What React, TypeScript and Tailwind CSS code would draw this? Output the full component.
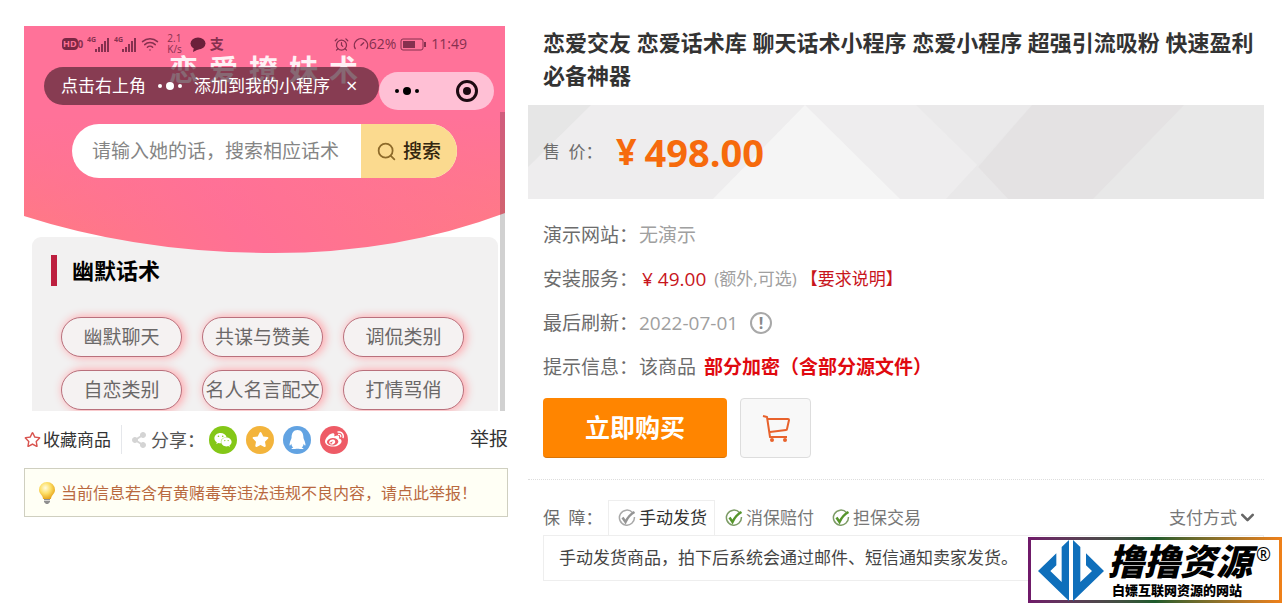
import { FaQq, FaRegStar, FaShareAlt, FaStar, FaWeibo, FaWeixin } from "react-icons/fa";
import { Search, Wifi, AlarmClock, Gauge, ChevronDown } from "lucide-react";
import clsx from "clsx";

const categories = ["幽默聊天", "共谋与赞美", "调侃类别", "自恋类别", "名人名言配文", "打情骂俏"];

const guarantees = [
    { text: "手动发货", active: true },
    { text: "消保赔付", active: false },
    { text: "担保交易", active: false },
];

const shareLinks = [
    { name: "微信", color: "bg-[#84c717]", icon: <FaWeixin size={18} /> },
    { name: "QQ空间", color: "bg-[#f3b43c]", icon: <FaStar size={17} /> },
    { name: "QQ", color: "bg-[#62a3e2]", icon: <FaQq size={19} /> },
    { name: "微博", color: "bg-[#ee5b66]", icon: <FaWeibo size={19} /> },
];

function Signal() {
    return (
        <svg width="23" height="17" viewBox="0 0 23 17" fill="currentColor" aria-hidden="true">
            <text x="0" y="6" fontSize="7" fontWeight="700">4G</text>
            <path d="M8 13h2v3H8zM11 11h2v5h-2zM14 8h2v8h-2zM17 5h2v11h-2zM20 2h2v14h-2z" />
        </svg>
    );
}

//* Status bar at the top of the phone preview
function StatusBar() {
    return (
        <div className="flex h-9 items-center justify-between pr-[38px] pl-[38px] text-sm text-[#86304f]">
            <div className="flex items-center gap-1">
                <span className="flex items-center">
                    <span className="rounded-sm bg-[#7a2744] px-px text-[9px] leading-3 font-bold text-[#ff7395]">HD</span>
                    <span className="text-[10px] leading-3 font-bold">0</span>
                </span>
                <Signal />
                <Signal />
                <Wifi size={18} />
                <span className="ml-1 text-[10px] leading-[11px]">2.1<br />K/s</span>
                <svg className="ml-1" width="16" height="15" viewBox="0 0 16 15" fill="#6b1f3a" aria-hidden="true">
                    <ellipse cx="8" cy="6.500" rx="7.500" ry="6" />
                    <path d="M4 10l-1 5 6-3z" />
                </svg>
                <span className="text-sm font-bold">支</span>
            </div>
            <div className="flex items-center gap-1">
                <AlarmClock size={15} />
                <Gauge size={16} />
                <span className="-ml-1">62%</span>
                <svg width="27" height="13" viewBox="0 0 27 13" aria-hidden="true">
                    <rect x="1" y="1" width="22" height="11" rx="2" fill="none" stroke="currentColor" />
                    <rect x="3" y="3" width="12" height="7" fill="currentColor" />
                    <rect x="24" y="4" width="2" height="5" fill="currentColor" />
                </svg>
                <span>11:49</span>
            </div>
        </div>
    );
}

function PhonePreview() {
    return (
        <div className="relative h-[385px] w-[481px] overflow-hidden bg-white">
            <svg className="absolute inset-0 h-full w-full" viewBox="0 0 481 385" preserveAspectRatio="none" aria-hidden="true">
                <defs>
                    <linearGradient id="hero" x1="0" y1="1" x2="1" y2="0.700">
                        <stop offset="0" stopColor="#ff7a83" />
                        <stop offset="0.450" stopColor="#ff7095" />
                        <stop offset="1" stopColor="#ff7a85" />
                    </linearGradient>
                    <linearGradient id="heroTop" x1="0" y1="0" x2="0" y2="1">
                        <stop offset="0" stopColor="#ff7299" />
                        <stop offset="0.400" stopColor="#ff7299" />
                        <stop offset="0.900" stopColor="#ff7299" stopOpacity="0" />
                    </linearGradient>
                </defs>
                <rect x="8" y="211" width="466" height="190" rx="9" fill="#f2f1f1" />
                <path d="M0 0H481V187Q375 227 250 227Q115 227 0 190Z" fill="url(#hero)" />
                <path d="M0 0H481V187Q375 227 250 227Q115 227 0 190Z" fill="url(#heroTop)" />
                <path d="M476 86h5v299h-5z" fill="#000" fillOpacity="0.180" />
            </svg>

            <div className="relative">
                <StatusBar />
                <div className="absolute top-[26px] left-[145px] flex gap-[11px] text-[29px] leading-9 font-bold text-white/90">
                    {["恋", "爱", "撩", "妹", "术"].map((c) => <span key={c}>{c}</span>)}
                </div>
                <div className="relative ml-5 flex pt-[5px]">
                    <div className="flex h-[38px] w-[335px] items-center rounded-full bg-[#461e2d]/65 pl-[17px] text-[17px] text-white">
                        <span>点击右上角</span>
                        <span className="mx-3 flex items-center gap-1">
                            <i className="size-1 rounded-full bg-white" />
                            <i className="size-2 rounded-full bg-white" />
                            <i className="size-1 rounded-full bg-white" />
                        </span>
                        <span>添加到我的小程序</span>
                        <button type="button" aria-label="关闭" className="ml-4 text-xl leading-5">×</button>
                    </div>
                    <div className="mt-[5px] flex h-[38px] w-[115px] items-center justify-between rounded-full bg-[#ffc0d5] pr-4 pl-[16px]">
                        <span className="flex items-center gap-1">
                            <i className="size-1 rounded-full bg-black" />
                            <i className="size-2 rounded-full bg-black" />
                            <i className="size-1 rounded-full bg-black" />
                        </span>
                        <span className="flex size-[22px] items-center justify-center rounded-full border-3 border-[#1d0a12]">
                            <i className="size-2 rounded-full bg-[#1d0a12]" />
                        </span>
                    </div>
                </div>
                <div className="mt-[14px] ml-12 flex h-[54px] w-[385px] overflow-hidden rounded-full bg-white">
                    <input
                        type="text"
                        aria-label="搜索话术"
                        placeholder="请输入她的话，搜索相应话术"
                        className="min-w-0 flex-1 pl-[20px] text-[19px] text-gray-600 outline-none placeholder:text-[#858585]"
                    />
                    <button type="button" className="flex w-24 items-center gap-[6px] bg-[#fbda8f] pl-[15px] text-[19px] font-medium text-[#33260f]">
                        <Search size={21} color="#8d6a2a" />
                        搜索
                    </button>
                </div>
                <div className="mt-[76px] ml-[27px] flex h-8 items-center gap-[15px]">
                    <i className="h-[31px] w-[6px] bg-[#bd1f3f]" />
                    <h2 className="text-[22px] font-bold text-black">幽默话术</h2>
                </div>
                <div className="mt-[31px] ml-[37px] grid w-[403px] grid-cols-3 gap-x-5 gap-y-[13px]">
                    {categories.map((c) => (
                        <button
                            key={c}
                            type="button"
                            className="h-10 rounded-full border border-[#b9707c] bg-[#f5f2f2] text-[19px] whitespace-nowrap text-[#6b6868] shadow-[2px_0_9px_1px_#ffa9ae]"
                        >
                            {c}
                        </button>
                    ))}
                </div>
            </div>
        </div>
    );
}

function Bulb() {
    return (
        <svg width="18" height="24" viewBox="0 0 18 24" className="shrink-0" aria-hidden="true">
            <defs>
                <radialGradient id="bulb" cx="0.400" cy="0.350" r="0.650">
                    <stop offset="0" stopColor="#fffbe0" />
                    <stop offset="0.500" stopColor="#fde06a" />
                    <stop offset="1" stopColor="#e8a71c" />
                </radialGradient>
            </defs>
            <path d="M9 1a8 8 0 0 0-8 8c0 4 4 5 4 9h8c0-4 4-5 4-9a8 8 0 0 0-8-8z" fill="url(#bulb)" />
            <path d="M6 18h6v3l-2 2H8l-2-2z" fill="#8f8f8f" />
            <path d="M6 19.500h6" stroke="#d5d5d5" />
        </svg>
    );
}

function CheckMark({ gray }: { gray: boolean }) {
    return (
        <svg width="18" height="18" viewBox="0 0 18 18" fill="none" className="shrink-0" aria-hidden="true">
            <path d="M14.500 3.600A7.500 7.500 0 1 0 16.400 8" stroke={gray ? "#a9a9a9" : "#7d9c66"} strokeWidth="1.500" />
            <path d="M4.500 8.500l3 4.500C9.500 8.500 12 5.500 16.500 3" stroke={gray ? "#949494" : "#55952a"} strokeWidth="2.500" />
        </svg>
    );
}

function InfoRow({ label, children }: { label: string; children: React.ReactNode }) {
    return (
        <div className="flex h-11 items-center">
            <dt className="w-24 shrink-0 text-[19px] whitespace-nowrap text-[#6c6c6c]">{label}</dt>
            <dd className="flex items-center text-[19px] whitespace-nowrap text-[#a0a0a0]">{children}</dd>
        </div>
    );
}

function PricePanel() {
    return (
        <div className="relative flex h-[94px] items-center bg-[#eeedee] pl-[15px]">
            <svg className="absolute inset-0 h-full w-full" viewBox="0 0 736 94" preserveAspectRatio="none" aria-hidden="true">
                <path d="M0 0H63L0 62Z" fill="#e6e6e6" />
                <path d="M277 0L372 94H185Z" fill="#f5f5f5" />
                <path d="M388 0H736V94H484Z" fill="#eae9ea" />
                <path d="M504 0L418 94H480L450 62Z" fill="#e9e8e9" />
                <path d="M504 0H736V94H480L450 62Z" fill="#e4e2e3" />
                <path d="M656 0H736V94H565Z" fill="#e8e8e8" />
            </svg>
            <span className="relative w-[73px] text-[17px] text-[#6c6c6c]">售&ensp;价：</span>
            <strong className="relative flex items-center text-[38px] leading-none text-[#f66a0c]">
                <span className="mr-2 text-[36px]">¥</span>498.00
            </strong>
        </div>
    );
}

//* Site badge pinned to the corner of the window
function SiteBadge() {
    return (
        <div className="fixed right-[5px] bottom-0 h-[66px] w-[254px] bg-linear-to-r from-[#70186a] via-[#1c5b2c] to-[#f08018] p-[3px]">
            <div className="flex h-full items-center bg-white pl-[7px]">
                <svg width="66" height="61" viewBox="42 17 198 183" fill="#0f6fbb" className="shrink-0" aria-hidden="true">
                    <path d="M42 110L97 57V93L79 110L113 143V38L135 17V200Z" />
                    <path d="M240 110L186 57V93L204 110L169 143V38L147 17V200Z" />
                </svg>
                <div className="ml-1 flex flex-col whitespace-nowrap text-black">
                    <span className="flex text-[36px] leading-10 font-black italic">
                        撸撸资源
                        <sup className="top-0 ml-1 text-lg leading-6 font-normal not-italic">®</sup>
                    </span>
                    <span className="ml-1 text-[13px] leading-4 font-black">白嫖互联网资源的网站</span>
                </div>
            </div>
        </div>
    );
}

export default function App() {
    return (
        <main className="flex gap-5 bg-white pt-[26px] pr-[23px] pl-6 font-['Open_Sans','Noto_Sans_CJK_SC',sans-serif]">
            <section className="w-[484px] shrink-0">
                <PhonePreview />
                <div className="flex h-[57px] items-center text-[#333]">
                    <button type="button" className="flex items-center gap-[2px] border-r border-gray-200 py-[2px] pr-[10px] text-[17px]">
                        <FaRegStar size={17} color="#d9544f" />
                        收藏商品
                    </button>
                    <div className="ml-[9px] flex items-center text-lg text-[#555]">
                        <FaShareAlt size={16} color="#d4d4d4" className="mr-1" />
                        分享：
                    </div>
                    <div className="ml-1 flex gap-[9px]">
                        {shareLinks.map((s) => (
                            <a
                                key={s.name}
                                href="#"
                                aria-label={s.name}
                                className={clsx("flex size-7 items-center justify-center rounded-full text-white", s.color)}
                            >
                                {s.icon}
                            </a>
                        ))}
                    </div>
                    <a href="#" className="ml-auto text-[19px]">举报</a>
                </div>
                <a href="#" className="flex h-[49px] items-center gap-[5px] border border-[#cfcfc0] bg-[#fffff5] pl-[13px] text-base whitespace-nowrap text-[#b9693f]">
                    <Bulb />
                    当前信息若含有黄赌毒等违法违规不良内容，请点此举报！
                </a>
            </section>

            <section className="min-w-0 flex-1">
                <h1 className="mb-[13px] pl-[15px] text-[22px] leading-[33px] font-bold text-[#333]">
                    恋爱交友 恋爱话术库 聊天话术小程序 恋爱小程序 超强引流吸粉 快速盈利必备神器
                </h1>
                <PricePanel />
                <dl className="mt-[14px] pl-[15px]">
                    <InfoRow label="演示网站：">无演示</InfoRow>
                    <InfoRow label="安装服务：">
                        <span className="ml-[3px] text-[#c8151c]">¥ 49.00</span>
                        <span className="ml-2 text-[17px]">(额外,可选)</span>
                        <a href="#" className="ml-1 text-[17px] text-[#c8151c]">【要求说明】</a>
                    </InfoRow>
                    <InfoRow label="最后刷新：">
                        2022-07-01
                        <span className="ml-3 flex size-[22px] items-center justify-center rounded-full border-2 border-[#a8a8a8] text-base font-bold text-[#888]">!</span>
                    </InfoRow>
                    <InfoRow label="提示信息：">
                        <span className="text-[#6c6c6c]">该商品</span>
                        <strong className="ml-2 text-[#e0090f]">部分加密（含部分源文件）</strong>
                    </InfoRow>
                </dl>
                <div className="mt-[9px] flex gap-[13px] pl-[15px]">
                    <button type="button" className="h-[60px] w-[184px] rounded border-b border-[#d87408] bg-[#ff8500] text-[25px] font-bold text-white">
                        立即购买
                    </button>
                    <button type="button" aria-label="加入购物车" className="flex h-[60px] w-[71px] items-center justify-center rounded border border-[#ddd] bg-[#f8f8f8]">
                        <svg width="28" height="28" viewBox="0 0 28 28" fill="none" stroke="#e8622c" strokeWidth="2" aria-hidden="true">
                            <path d="M1 2l4 1 3 20h17M6 5h20q1 0 1 1l-2 9q0 1-1 1L8 18" strokeLinejoin="round" />
                            <circle cx="10" cy="26" r="2" fill="#e8622c" stroke="none" />
                            <circle cx="23" cy="26" r="2" fill="#e8622c" stroke="none" />
                        </svg>
                    </button>
                </div>
                <div className="mt-[21px] border-t border-dotted border-[#ddd] pt-5 pl-[15px]">
                    <div className="flex items-center text-[17px] text-[#777]">
                        <span className="w-[65px] text-[#6c6c6c]">保&ensp;障：</span>
                        {guarantees.map((g) => (
                            <button
                                key={g.text}
                                type="button"
                                className={clsx(
                                    "flex h-[35px] w-[107px] items-center gap-[3px] border border-b-0 pl-[9px] whitespace-nowrap",
                                    g.active ? "border-[#eee] text-[#333]" : "border-transparent",
                                )}
                            >
                                <CheckMark gray={g.active} />
                                {g.text}
                            </button>
                        ))}
                        <button type="button" className="mr-[6px] ml-auto flex items-center text-[17px]">
                            支付方式
                            <ChevronDown size={21} strokeWidth={3} color="#666" />
                        </button>
                    </div>
                    <p className="flex h-[46px] items-center border border-[#eee] pl-[15px] text-[17px] text-[#444]">
                        手动发货商品，拍下后系统会通过邮件、短信通知卖家发货。
                    </p>
                </div>
            </section>

            <SiteBadge />
        </main>
    );
}
